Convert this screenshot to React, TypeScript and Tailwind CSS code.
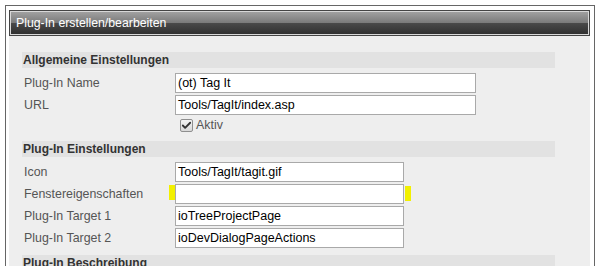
import { Check } from "lucide-react"

const font = { fontFamily: '"Liberation Sans", Arial, sans-serif' }

function Section({ title }: { title: string }) {
  return (
    <div className="h-[16px] w-[533px] bg-[#e2e2e2] pl-[1px] text-[12px] leading-[16px] font-bold text-[#333]">
      {title}
    </div>
  )
}

function Row({ label, value, wide, marked }: { label: string; value: string; wide?: boolean; marked?: boolean }) {
  return (
    <div className="flex h-[20px] items-center">
      <div className="w-[153px] pl-[2px] text-[12.4px] text-[#555]">{label}</div>
      <div className="relative">
        {marked && <span className="absolute left-[-6px] top-[1px] h-[15px] w-[6px] bg-[#f2f000]" />}
        <div
          className={`h-[20px] ${wide ? "w-[301px]" : "w-[229px]"} border border-[#a9a9a9] bg-white pl-[2px] text-[12.5px] leading-[18px] text-black`}
        >
          {value}
        </div>
        {marked && <span className="absolute right-[-7px] top-[2px] h-[15px] w-[6px] bg-[#f2f000]" />}
      </div>
    </div>
  )
}

export default function App() {
  return (
    <div className="h-[266px] overflow-hidden bg-white pl-[5px] pt-[5px]" style={font}>
      <div className="w-[590px] border border-[#666] bg-white px-[3px] pt-[4px] pb-[20px]">
        <div className="h-[26px] w-[581px] border border-[#444] bg-[linear-gradient(#a4a4a4,#7a7a7a_50%,#4a4a4a_50%,#2e2e2e)] shadow-[inset_0_0_0_1px_#d8d8d8] pl-[6px] text-[12.3px] leading-[24px] text-white">
          Plug-In erstellen/bearbeiten
        </div>
        <div className="w-[581px] bg-[#eeeeee] pl-[13px] pt-[16px] pb-[20px]">
          <Section title="Allgemeine Einstellungen" />
          <div className="mt-[5px] flex flex-col gap-[2px]">
            <Row label="Plug-In Name" value="(ot) Tag It" wide />
            <Row label="URL" value="Tools/TagIt/index.asp" wide />
            <div className="flex h-[17px] items-center pl-[158px] text-[12.4px] text-[#555]">
              <span className="mr-[3px] flex h-[13px] w-[13px] items-center justify-center rounded-[2px] border border-[#8f8f8f] bg-[linear-gradient(#f4f4f4,#d8d8d8)]">
                <Check className="h-[11px] w-[11px] text-[#333]" strokeWidth={4} />
              </span>
              Aktiv
            </div>
          </div>
          <div className="mt-[7px]">
            <Section title="Plug-In Einstellungen" />
          </div>
          <div className="mt-[5px] flex flex-col gap-[2px]">
            <Row label="Icon" value="Tools/TagIt/tagit.gif" />
            <Row label="Fenstereigenschaften" value="" marked />
            <Row label="Plug-In Target 1" value="ioTreeProjectPage" />
            <Row label="Plug-In Target 2" value="ioDevDialogPageActions" />
          </div>
          <div className="mt-[7px]">
            <Section title="Plug-In Beschreibung" />
          </div>
        </div>
      </div>
    </div>
  )
}
